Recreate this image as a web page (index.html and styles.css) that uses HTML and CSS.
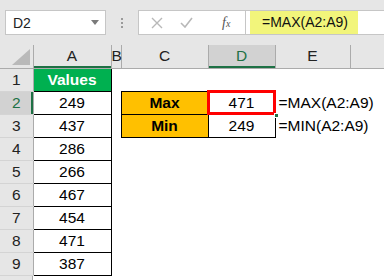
FILE: index.html
```html
<!DOCTYPE html>
<html>
<head>
<meta charset="utf-8">
<link rel="stylesheet" href="styles.css">
</head>
<body>
<div class="app">
  <div class="toolbar">
    <div class="namebox"><span>D2</span><svg class="dd" width="8" height="5" viewBox="0 0 8 5"><path d="M0 0H8L4 5Z" fill="#7a7a7a"/></svg></div>
    <div class="dots"><i></i><i></i><i></i></div>
    <div class="fxbox">
      <svg class="ic" width="12" height="12" viewBox="0 0 12 12"><path d="M1 1L11 11M11 1L1 11" stroke="#b8b8b8" stroke-width="1.4"/></svg>
      <svg class="ic" width="13" height="11" viewBox="0 0 13 11"><path d="M1 6L5 10L12 1" stroke="#b8b8b8" stroke-width="1.6" fill="none"/></svg>
      <span class="fx">f<sub>x</sub></span>
    </div>
    <div class="formula"><span class="hl">=MAX(A2:A9)</span></div>
  </div>
  <table class="sheet">
    <colgroup>
      <col class="c-rh"><col class="c-a"><col class="c-b"><col class="c-c"><col class="c-d"><col class="c-e"><col>
    </colgroup>
    <tr class="hdr">
      <th class="corner"><svg width="18" height="16" viewBox="0 0 18 16"><path d="M18 0V16H0Z" fill="#b9b9b9"/></svg></th>
      <th class="ha">A</th><th>B</th><th>C</th><th class="hsel">D</th><th>E</th><th class="hlast"></th>
    </tr>
    <tr><th class="rh">1</th><td class="values">Values</td><td></td><td></td><td></td><td></td><td></td></tr>
    <tr><th class="rh rsel">2</th><td class="bx">249</td><td></td><td class="lab">Max</td><td class="bx sel">471<i class="handle"></i></td><td class="fm">=MAX(A2:A9)</td><td></td></tr>
    <tr><th class="rh">3</th><td class="bx">437</td><td></td><td class="lab">Min</td><td class="bx">249</td><td class="fm">=MIN(A2:A9)</td><td></td></tr>
    <tr><th class="rh">4</th><td class="bx">286</td><td></td><td></td><td></td><td></td><td></td></tr>
    <tr><th class="rh">5</th><td class="bx">266</td><td></td><td></td><td></td><td></td><td></td></tr>
    <tr><th class="rh">6</th><td class="bx">467</td><td></td><td></td><td></td><td></td><td></td></tr>
    <tr><th class="rh">7</th><td class="bx">454</td><td></td><td></td><td></td><td></td><td></td></tr>
    <tr><th class="rh">8</th><td class="bx">471</td><td></td><td></td><td></td><td></td><td></td></tr>
    <tr><th class="rh">9</th><td class="bx">387</td><td></td><td></td><td></td><td></td><td></td></tr>
  </table>
  <div class="tail"></div>
</div>
</body>
</html>
```
FILE: styles.css
```css
* { box-sizing: border-box; }
html, body { margin: 0; padding: 0; background: #fff; }
body { width: 384px; height: 280px; overflow: hidden; font-family: "Liberation Sans", Arial, sans-serif; color: #000; }
.app { width: 384px; }
.toolbar {
  height: 45px; background: #e6e6e6;
  display: flex; align-items: flex-start; padding-top: 10px; padding-left: 5px;
}
.namebox {
  width: 101px; height: 25px; background: #fff; border: 1px solid #c6c6c6;
  display: flex; align-items: center; justify-content: space-between;
  padding: 0 6px 0 7px; font-size: 14px; color: #222;
}
.dots { width: 32px; height: 25px; display: flex; flex-direction: column; align-items: center; justify-content: center; gap: 2px; }
.dots i { display: block; width: 2px; height: 2px; background: #9a9a9a; }
.fxbox {
  width: 108px; height: 25px; background: #fff; border: 1px solid #c6c6c6;
  display: flex; align-items: center; padding-left: 12px; gap: 17px;
}
.fx { font-family: "Liberation Serif", serif; font-style: italic; font-size: 14px; color: #555; margin-left: 12px; }
.fx sub { font-size: 10px; vertical-align: 0; }
.formula {
  flex: 1; height: 25px; background: #fff; border-top: 1px solid #c6c6c6; border-bottom: 1px solid #c6c6c6;
  display: flex; padding-left: 4px;
}
.hl {
  background: #f2f57b; width: 108px; height: 23px; font-size: 14px; line-height: 23px; padding-left: 12px; color: #111;
}
.sheet { border-collapse: collapse; table-layout: fixed; width: 384px; font-size: 15.5px; }
.c-rh { width: 33px; } .c-a { width: 78px; } .c-b { width: 10px; } .c-c { width: 87px; } .c-d { width: 67px; } .c-e { width: 75px; }
tr { height: 23px; }
th, td { padding: 0; height: 22px; text-align: center; font-weight: normal; white-space: nowrap; overflow: visible; line-height: 18px; }
.hdr th { background: #e6e6e6; border-right: 1px solid #ababab; border-bottom: 1px solid #ababab; color: #222; font-size: 15.5px; }
.hdr th.hlast { border-right: none; }
.hdr th.corner { position: relative; }
.corner svg { position: absolute; right: 3px; bottom: 3px; }
.hdr th.ha { box-shadow: inset 0 -2px 0 #1e7145; }
.hdr th.hsel { background: #d2d2d2; box-shadow: inset 0 -2px 0 #1e7145; color: #1e7145; }
.rh { background: #e6e6e6; border-right: 1px solid #ababab; border-bottom: 1px solid #d4d4d4; color: #222; }
.rh.rsel { background: #d2d2d2; box-shadow: inset -2px 0 0 #1e7145; color: #1e7145; }
.values { background: #00b050; color: #fff; font-weight: bold; border: 1px solid #000; }
.bx { border: 1px solid #000; }
.lab { background: #ffc000; font-weight: bold; border: 1px solid #000; }
.sel { outline: 3px solid #ff0000; outline-offset: -2px; position: relative; }
.handle { position: absolute; right: -4px; bottom: -4px; width: 5px; height: 5px; background: #1e7145; border: 1px solid #fff; }
.fm { text-align: left; padding-left: 3px; overflow: visible; }
.tail { width: 33px; height: 10px; background: #e6e6e6; border-right: 1px solid #ababab; }
```
